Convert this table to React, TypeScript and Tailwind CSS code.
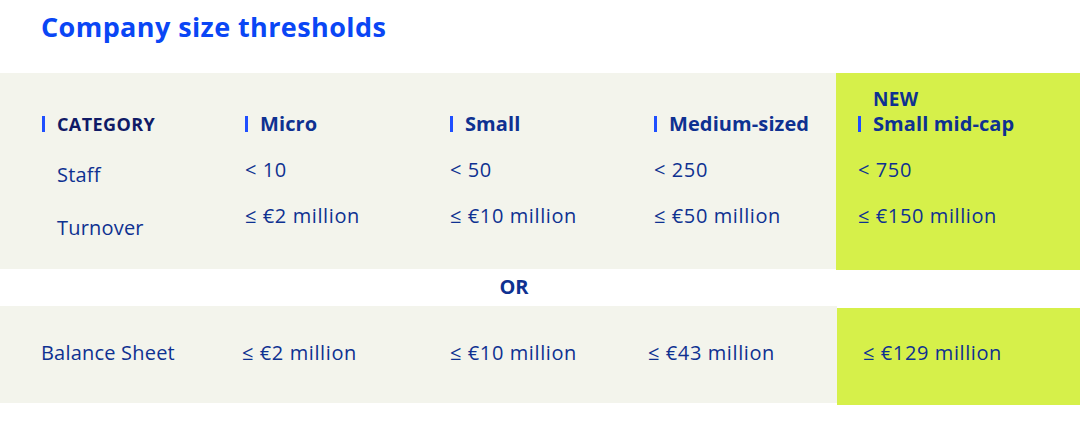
import React from "react";

const font = { fontFamily: '"Open Sans", "Liberation Sans", sans-serif' };

function Head({ children }: { children: React.ReactNode }) {
  return (
    <div className="flex items-center h-[24px]">
      <span className="w-[3px] h-[16px] bg-[#1f4fff] mr-[12px] shrink-0" />
      <span className="font-bold text-[20px] leading-[22px] tracking-[0.1px] text-[#0e3191] whitespace-nowrap">
        {children}
      </span>
    </div>
  );
}

function Val({ children }: { children: React.ReactNode }) {
  return (
    <div className="h-[24px] flex items-center text-[20px] leading-[22px] font-medium tracking-[0.6px] text-[#0e3191] whitespace-nowrap">
      {children}
    </div>
  );
}

function Col({ w, head, vals }: { w: string; head: React.ReactNode; vals: string[] }) {
  return (
    <div className={`${w} flex flex-col pt-[39px]`}>
      {head}
      <div className="flex flex-col gap-[22px] mt-[22px]">
        {vals.map((v) => (
          <Val key={v}>{v}</Val>
        ))}
      </div>
    </div>
  );
}

export default function App() {
  return (
    <div className="w-[1080px] h-[435px] bg-white" style={font}>
      <div className="h-[73px] pl-[41px] pt-[9px]">
        <h1 className="text-[27px] tracking-[0.4px] font-bold text-[#0a46f5] leading-[36px]">Company size thresholds</h1>
      </div>
      <div className="flex h-[196px] bg-[#f3f4ec]">
        <div className="w-[245px] pl-[42px] pt-[39px] flex flex-col">
          <div className="flex items-center h-[24px]">
            <span className="w-[3px] h-[16px] bg-[#1f4fff] mr-[12px] shrink-0" />
            <span className="font-bold text-[18px] leading-[22px] text-[#101a66] tracking-[0.4px]">CATEGORY</span>
          </div>
          <div className="flex flex-col gap-[29px] mt-[27px] pl-[15px]">
            <div className="h-[24px] flex items-center text-[20px] leading-[22px] font-medium tracking-[0.2px] text-[#0e3191]">Staff</div>
            <div className="h-[24px] flex items-center text-[20px] leading-[22px] font-medium tracking-[0.2px] text-[#0e3191]">Turnover</div>
          </div>
        </div>
        <Col w="w-[205px]" head={<Head>Micro</Head>} vals={["< 10", "≤ €2 million"]} />
        <Col w="w-[204px]" head={<Head>Small</Head>} vals={["< 50", "≤ €10 million"]} />
        <Col w="w-[182px]" head={<Head>Medium-sized</Head>} vals={["< 250", "≤ €50 million"]} />
        <div className="flex-1 bg-[#d6f04a] pl-[22px] h-[197px] flex flex-col pt-[13px]">
          <div className="pl-[15px] h-[26px] flex items-center font-bold text-[19px] tracking-[0.3px] leading-[20px] text-[#0e3191]">
            NEW
          </div>
          <Head>Small mid-cap</Head>
          <div className="flex flex-col gap-[22px] mt-[22px]">
            <Val>{"< 750"}</Val>
            <Val>≤ €150 million</Val>
          </div>
        </div>
      </div>
      <div className="h-[37px] flex items-center justify-center">
        <span className="font-bold text-[20px] leading-[22px] text-[#0e3191] -mt-[1px] ml-[-52px]">OR</span>
      </div>
      <div className="flex items-start">
        <div className="flex-1 h-[97px] bg-[#f3f4ec] flex items-center pb-[3px] text-[20px] leading-[22px] font-medium text-[#0e3191] whitespace-nowrap">
          <div className="w-[242px] pl-[41px] tracking-[0.2px]">Balance Sheet</div>
          <div className="w-[208px] tracking-[0.6px]">≤ €2 million</div>
          <div className="w-[198px] tracking-[0.6px]">≤ €10 million</div>
          <div className="flex-1 tracking-[0.6px]">≤ €43 million</div>
        </div>
        <div className="w-[243px] h-[97px] mt-[2px] bg-[#d6f04a] flex items-center pb-[7px] pl-[26px] text-[20px] leading-[22px] font-medium tracking-[0.6px] text-[#0e3191] whitespace-nowrap">
          ≤ €129 million
        </div>
      </div>
    </div>
  );
}
